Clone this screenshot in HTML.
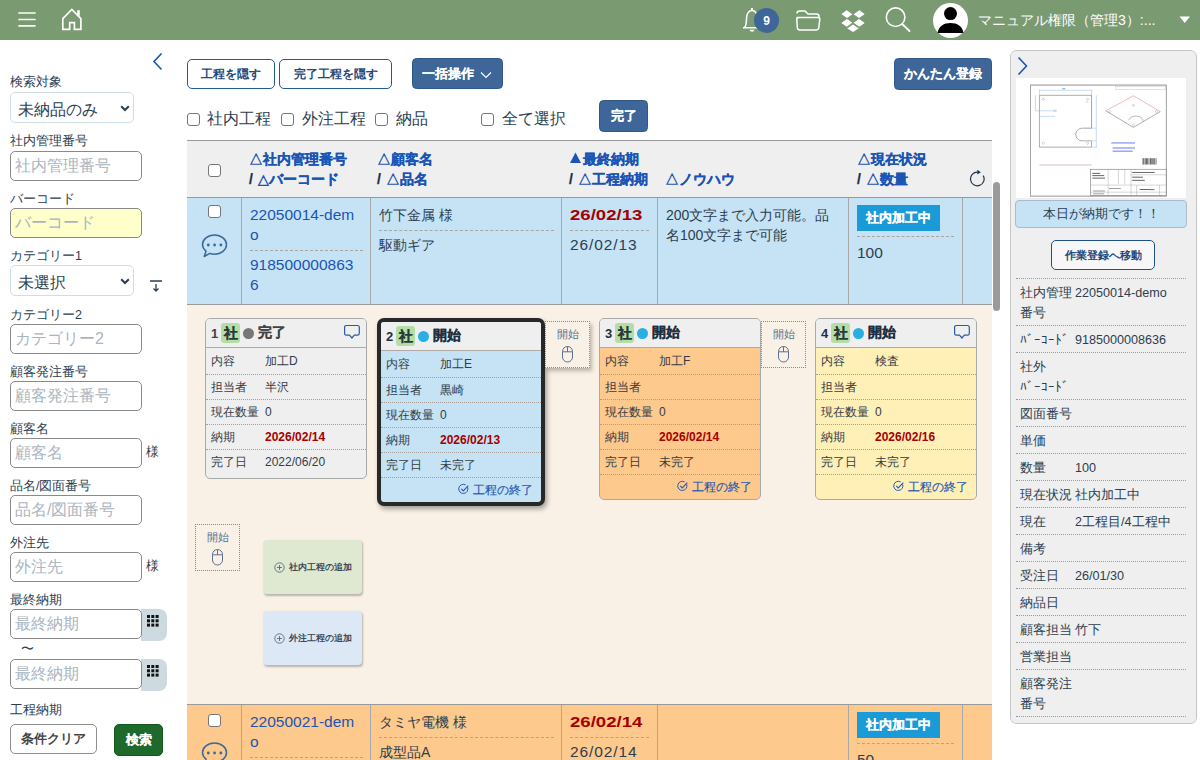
<!DOCTYPE html>
<html><head><meta charset="utf-8">
<style>
*{box-sizing:border-box;margin:0;padding:0}
html,body{width:1200px;height:760px;overflow:hidden;background:#fff;font-family:"Liberation Sans",sans-serif;color:#2c3e50}
.a{position:absolute}
#hdr{left:0;top:0;width:1200px;height:40px;background:#7a9a72}
.lbl{position:absolute;left:10px;font-size:12.5px;line-height:16px;color:#2c3e50;white-space:nowrap}
.inp{position:absolute;left:10px;width:132px;height:30px;border:1px solid #8a8a8a;border-radius:5px;background:#fff;font-size:16px;line-height:28px;padding-left:4px;color:#a9b5bf;white-space:nowrap}
.sel{position:absolute;left:10px;width:124px;height:31px;border:1px solid #cfdde8;border-radius:5px;background:#fff;font-size:16px;line-height:33px;padding-left:7px;color:#2c3e50}
.sel svg{position:absolute;right:3px;top:12px}
.sama{position:absolute;left:146px;font-size:13px;color:#2c3e50;margin-top:-0.5px}
.cal{position:absolute;left:141px;width:26px;height:32px;background:#cddadf;border-radius:0 8px 8px 0}
.btnw{position:absolute;border:1px solid #245a8e;border-radius:5px;background:#fff;color:#1f4a7c;font-weight:bold;font-size:12.3px;text-align:center;line-height:28px}
.btnb{position:absolute;border-radius:4.5px;background:#3e6699;border:1px solid #2d5888;color:#fff;font-weight:bold;font-size:12.5px;text-align:center}
.cb{position:absolute;width:13px;height:13px;border:1px solid #767676;border-radius:3px;background:#fff}
.chk{position:absolute;font-size:16px;line-height:18px;color:#2c3e50;white-space:nowrap}
.th{position:absolute;font-size:14px;font-weight:bold;color:#1a55b5;line-height:20px;white-space:nowrap}
.th i{font-style:normal;color:#1c2d3d;margin-right:1.5px}
.th u{text-decoration:none;-webkit-text-stroke:0}
.vl{position:absolute;width:1px;background:#a8a8a8}
.cell{position:absolute;font-size:14px;line-height:20px;white-space:nowrap}
.n{font-size:15.5px}
.rn{font-size:15.5px;display:inline-block;transform:scaleX(1.2);transform-origin:0 0}
.gn{font-size:15.5px;letter-spacing:0.9px}
.dash{position:absolute;height:0;border-top:1px dashed #aba59f}
.link{color:#1a55b5}
.red{color:#a50000;font-weight:bold}
.badge{position:absolute;background:#1a9ad6;color:#fff;font-weight:bold;font-size:13px;text-align:center;line-height:24px}
.card{position:absolute;border:1px solid #a9a9a9;border-radius:5px;background:#efefef;overflow:hidden}
.ch{position:absolute;left:0;top:0;right:0;height:29px;background:#efefef;border-bottom:1px solid #b0aaa5;z-index:2}
.cr{position:absolute;left:0;right:0;height:25px;border-top:1px dotted #a89f98;font-size:12px;line-height:24px;color:#333d48;white-space:nowrap}
.cr span{position:absolute;left:5px}
.cr b{position:absolute;left:59px;font-weight:normal}
.cr b.r{color:#a50000;font-weight:bold}
.num{position:absolute;font-size:13px;font-weight:bold;color:#1f3040;line-height:16px}
.sha{position:absolute;width:19px;height:20px;background:#b5dea5;border-radius:3px;font-size:14px;font-weight:bold;color:#2a3a3a;text-align:center;line-height:20px}
.dot{position:absolute;width:11px;height:11px;border-radius:50%;background:#2ab0e0}
.stt{position:absolute;font-size:13.5px;font-weight:bold;color:#1f3040;line-height:16px;white-space:nowrap}
.fin{position:absolute;font-size:12px;color:#2458b0;-webkit-text-stroke:0.15px currentColor;line-height:16px;white-space:nowrap}
.drop{position:absolute;width:45px;height:47px;border:1px dotted #8a8a8a;background:#f9f1e6;text-align:center}
.drop div{position:absolute;left:0;right:0;top:6px;font-size:10.5px;line-height:13px;color:#5a7090}
.drop svg{position:absolute;left:16px;top:24px}
.addb{position:absolute;width:99px;height:54px;border-radius:4px;box-shadow:1px 1.5px 2px rgba(0,0,0,.25);font-size:8.7px;font-weight:bold;color:#3a4a5c;line-height:54px;white-space:nowrap}
.addb svg{position:absolute;left:11px;top:22px}
.addb span{position:absolute;left:26px}
.n2{font-size:12.6px}
.pi{position:absolute;left:1016px;width:170px;border-top:1px dotted #999;font-size:12.7px;line-height:20px;color:#2c3e50}
.pi .pl{position:absolute;left:4px;width:54px}
.pi b{position:absolute;left:59px;font-weight:normal;white-space:nowrap}
.th,.badge,.stt,.sha{-webkit-text-stroke:0.25px currentColor}
.btnb{-webkit-text-stroke:0.1px currentColor}
</style></head><body>
<!-- header -->
<div id="hdr" class="a">
<svg class="a" style="left:0;top:0" width="1200" height="40">
<g stroke="#fff" stroke-width="1.7" stroke-linecap="round" fill="none">
<line x1="19" y1="13" x2="35" y2="13"/><line x1="19" y1="19.5" x2="35" y2="19.5"/><line x1="19" y1="25.8" x2="35" y2="25.8"/>
<path d="M62.8 29.4 V18.6 L71.8 9.4 L80.9 18.6 V29.4 H74.4 V22.6 H69.7 V29.4 Z" stroke-linejoin="miter" stroke-linecap="butt"/>
</g>
<rect x="77.2" y="10.2" width="2.6" height="5.5" fill="#fff"/>
<!-- bell -->
<g fill="none" stroke="#fff" stroke-width="1.5" stroke-linejoin="round">
<path d="M743 27.8 H761 M744.5 27.8 C746.5 25 746.5 22 746.5 18.5 C746.5 13.5 749 10.5 752 10.5 C755 10.5 757.5 13.5 757.5 18.5 C757.5 22 757.5 25 759.5 27.8"/>
</g>
<circle cx="752" cy="9" r="1.2" fill="#fff"/>
<path d="M749.5 29.8 A2.6 2.6 0 0 0 754.5 29.8 Z" fill="#fff"/>
<circle cx="766.5" cy="20.4" r="12.5" fill="#3e6699"/>
<text x="766.5" y="24.6" text-anchor="middle" font-family="Liberation Sans" font-weight="bold" font-size="12" fill="#fff">9</text>
<!-- folder -->
<path d="M797 13.5 Q797 11 799.5 11 H805 L808 14 H816.5 Q819 14 819 16.5 V17.5" fill="none" stroke="#fff" stroke-width="1.5" stroke-linejoin="round"/>
<path d="M797 17.5 H818 Q820 17.5 819.8 19.5 L818.8 27.5 Q818.5 30 816 30 H800 Q797.5 30 797.3 27.5 L796.8 19.5 Q796.8 17.5 799 17.5 Z" fill="none" stroke="#fff" stroke-width="1.5" stroke-linejoin="round"/>

<!-- dropbox -->
<g fill="#fff">
<path d="M847 10 L853 14.3 L847 18.5 L841 14.3 Z"/>
<path d="M859 10 L865 14.3 L859 18.5 L853 14.3 Z"/>
<path d="M847 18.5 L853 22.7 L847 27 L841 22.7 Z"/>
<path d="M859 18.5 L865 22.7 L859 27 L853 22.7 Z"/>
<path d="M853 24 L859 28.2 L853 32 L847 28.2 Z"/>
</g>
<path d="M847 10 L853 14.3 L859 10 M841 14.3 L847 18.5 L853 14.3 L859 18.5 L865 14.3 M841 22.7 L847 18.5 L853 22.7 L859 18.5 L865 22.7 M847 27 L853 22.7 L859 27 M847 28.2 L853 24 L859 28.2" fill="none" stroke="#7a9a72" stroke-width="0.9"/>
<!-- search -->
<circle cx="895.6" cy="17.2" r="9.3" fill="none" stroke="#fff" stroke-width="1.6"/>
<line x1="902.2" y1="24" x2="909.5" y2="31" stroke="#fff" stroke-width="1.9" stroke-linecap="round"/>
<!-- avatar -->
<circle cx="950.5" cy="20.5" r="17.5" fill="#fff"/>
<circle cx="950.5" cy="13.6" r="6.5" fill="#000"/>
<path d="M937.6 33 C938.5 26 944 23 950.5 23 C957 23 962.5 26 963.4 33 Z" fill="#000"/>
<path d="M1179.5 16.5 H1190 L1184.75 23 Z" fill="#fff"/>
</svg>
<div class="a" style="left:978px;top:11.5px;font-size:14.1px;line-height:17px;color:#fff;white-space:nowrap">マニュアル権限（管理3）:...</div>
</div>
<!-- sidebar -->
<svg class="a" style="left:150px;top:50px" width="16" height="22"><path d="M11.5 3.5 L4 11.5 L11.5 19.5" fill="none" stroke="#1a55b5" stroke-width="1.6"/></svg>
<div class="lbl" style="top:74px">検索対象</div>
<div class="sel" style="top:92px">未納品のみ<svg width="10" height="7"><path d="M1.2 1.2 L5 5 L8.8 1.2" fill="none" stroke="#2c3e50" stroke-width="2"/></svg></div>
<div class="lbl" style="top:133px">社内管理番号</div>
<div class="inp" style="top:151px">社内管理番号</div>
<div class="lbl" style="top:191px">バーコード</div>
<div class="inp" style="top:208px;background:#ffffcc">バーコード</div>
<div class="lbl" style="top:248px">カテゴリー1</div>
<div class="sel" style="top:265px">未選択<svg width="10" height="7"><path d="M1.2 1.2 L5 5 L8.8 1.2" fill="none" stroke="#2c3e50" stroke-width="2"/></svg></div>
<svg class="a" style="left:149px;top:279px" width="14" height="14"><path d="M1 2 H13 M7 5 V12 M4.5 9.5 L7 12 L9.5 9.5" fill="none" stroke="#2c3e50" stroke-width="1.3"/></svg>
<div class="lbl" style="top:307px">カテゴリー2</div>
<div class="inp" style="top:324px">カテゴリー2</div>
<div class="lbl" style="top:364px">顧客発注番号</div>
<div class="inp" style="top:381px">顧客発注番号</div>
<div class="lbl" style="top:421px">顧客名</div>
<div class="inp" style="top:438px">顧客名</div>
<div class="sama" style="top:443px">様</div>
<div class="lbl" style="top:478px">品名/図面番号</div>
<div class="inp" style="top:495px">品名/図面番号</div>
<div class="lbl" style="top:535px">外注先</div>
<div class="inp" style="top:552px">外注先</div>
<div class="sama" style="top:557px">様</div>
<div class="lbl" style="top:592px">最終納期</div>
<div class="cal" style="top:609px"><svg class="a" style="left:6px;top:6px" width="12" height="12"><g fill="#111"><rect x="0" y="0" width="3" height="3"/><rect x="4.3" y="0" width="3" height="3"/><rect x="8.6" y="0" width="3" height="3"/><rect x="0" y="4.3" width="3" height="3"/><rect x="4.3" y="4.3" width="3" height="3"/><rect x="8.6" y="4.3" width="3" height="3"/><rect x="0" y="8.6" width="3" height="3"/><rect x="4.3" y="8.6" width="3" height="3"/><rect x="8.6" y="8.6" width="3" height="3"/></g></svg></div>
<div class="inp" style="top:609px">最終納期</div>
<div class="a" style="left:21px;top:640px;font-size:13px;color:#2c3e50">〜</div>
<div class="cal" style="top:659px"><svg class="a" style="left:6px;top:6px" width="12" height="12"><g fill="#111"><rect x="0" y="0" width="3" height="3"/><rect x="4.3" y="0" width="3" height="3"/><rect x="8.6" y="0" width="3" height="3"/><rect x="0" y="4.3" width="3" height="3"/><rect x="4.3" y="4.3" width="3" height="3"/><rect x="8.6" y="4.3" width="3" height="3"/><rect x="0" y="8.6" width="3" height="3"/><rect x="4.3" y="8.6" width="3" height="3"/><rect x="8.6" y="8.6" width="3" height="3"/></g></svg></div>
<div class="inp" style="top:659px">最終納期</div>
<div class="lbl" style="top:702px">工程納期</div>
<div class="a" style="left:10px;top:724px;width:87px;height:30px;border:1px solid #8e8e8e;border-radius:5px;background:#fff;color:#444;font-weight:bold;font-size:12.5px;line-height:28px;text-align:center">条件クリア</div>
<div class="a" style="left:114px;top:724px;width:49px;height:32px;border-radius:5px;background:#1e6a2c;border:1px solid #12591e;color:#fff;font-weight:bold;font-size:12.5px;line-height:30px;text-align:center;-webkit-text-stroke:0.2px #fff">検索</div>
<!-- main top -->
<div class="btnw" style="left:187px;top:59px;width:88px;height:30px">工程を隠す</div>
<div class="btnw" style="left:279px;top:59px;width:113px;height:30px">完了工程を隠す</div>
<div class="btnb" style="left:412px;top:58px;width:91px;height:31px;line-height:31px;padding-right:19px">一括操作<svg class="a" style="left:67px;top:12px" width="12" height="8"><path d="M1 1.5 L6 6.5 L11 1.5" fill="none" stroke="#fff" stroke-width="1.1"/></svg></div>
<div class="btnb" style="left:894px;top:58px;width:98px;height:32px;line-height:31px">かんたん登録</div>
<div class="cb" style="left:187px;top:113px"></div><div class="chk" style="left:207px;top:110px">社内工程</div>
<div class="cb" style="left:281px;top:113px"></div><div class="chk" style="left:302px;top:110px">外注工程</div>
<div class="cb" style="left:375px;top:113px"></div><div class="chk" style="left:396px;top:110px">納品</div>
<div class="cb" style="left:481px;top:113px"></div><div class="chk" style="left:502px;top:110px">全て選択</div>
<div class="btnb" style="left:599px;top:100px;width:49px;height:32px;line-height:31.5px">完了</div>
<!-- rows -->
<div class="a" style="left:187px;top:198px;width:805px;height:106px;background:#c6e3f5"></div>
<div class="vl" style="left:241px;top:198px;height:106px"></div>
<div class="vl" style="left:370px;top:198px;height:106px"></div>
<div class="vl" style="left:561px;top:198px;height:106px"></div>
<div class="vl" style="left:657px;top:198px;height:106px"></div>
<div class="vl" style="left:848px;top:198px;height:106px"></div>
<div class="vl" style="left:962px;top:198px;height:106px"></div>
<div class="cb" style="left:208px;top:205px"></div>
<div class="a" style="left:200.5px;top:233px"><svg width="28" height="26"><path d="M13.5 2 C20.2 2 25.5 6.3 25.5 11.6 C25.5 16.9 20.2 21.2 13.5 21.2 C11.8 21.2 10.2 20.9 8.8 20.4 L3.2 23.5 L5 18.2 C2.9 16.5 1.5 14.2 1.5 11.6 C1.5 6.3 6.8 2 13.5 2 Z" fill="none" stroke="#3a6a9a" stroke-width="1.5" stroke-linejoin="round"/><circle cx="7.3" cy="12" r="1.4" fill="#3a6a9a"/><circle cx="13.6" cy="12" r="1.4" fill="#3a6a9a"/><circle cx="19.9" cy="12" r="1.4" fill="#3a6a9a"/></svg></div>
<div class="cell link" style="left:250px;top:205px"><span class="n">22050014-dem<br>o</span></div>
<div class="dash" style="left:250px;top:250px;width:113px"></div>
<div class="cell link" style="left:250px;top:255px"><span class="n">918500000863<br>6</span></div>
<div class="cell" style="left:379px;top:205px">竹下金属 様</div>
<div class="dash" style="left:379px;top:230px;width:175px"></div>
<div class="cell" style="left:379px;top:235px">駆動ギア</div>
<div class="cell red" style="left:570px;top:205px"><span class="rn">26/02/13</span></div>
<div class="dash" style="left:570px;top:230px;width:79px"></div>
<div class="cell" style="left:570px;top:235px"><span class="gn">26/02/13</span></div>
<div class="cell" style="left:666px;top:205px">200文字まで入力可能。品<br>名100文字まで可能</div>
<div class="badge" style="left:857px;top:205px;width:83px;height:26px;line-height:26px">社内加工中</div>
<div class="dash" style="left:857px;top:236px;width:97px"></div>
<div class="cell" style="left:857px;top:243px"><span class="n">100</span></div>
<div class="a" style="left:187px;top:304px;width:805px;height:1px;background:#9a9a9a"></div>
<div class="a" style="left:187px;top:704px;width:805px;height:1px;background:#9a9a9a"></div>
<div class="a" style="left:187px;top:705px;width:805px;height:55px;background:#fec98c"></div>
<div class="vl" style="left:241px;top:705px;height:55px"></div>
<div class="vl" style="left:370px;top:705px;height:55px"></div>
<div class="vl" style="left:561px;top:705px;height:55px"></div>
<div class="vl" style="left:657px;top:705px;height:55px"></div>
<div class="vl" style="left:848px;top:705px;height:55px"></div>
<div class="vl" style="left:962px;top:705px;height:55px"></div>
<div class="cb" style="left:208px;top:714px"></div>
<div class="a" style="left:200.5px;top:741px"><svg width="28" height="26"><path d="M13.5 2 C20.2 2 25.5 6.3 25.5 11.6 C25.5 16.9 20.2 21.2 13.5 21.2 C11.8 21.2 10.2 20.9 8.8 20.4 L3.2 23.5 L5 18.2 C2.9 16.5 1.5 14.2 1.5 11.6 C1.5 6.3 6.8 2 13.5 2 Z" fill="none" stroke="#3a6a9a" stroke-width="1.5" stroke-linejoin="round"/><circle cx="7.3" cy="12" r="1.4" fill="#3a6a9a"/><circle cx="13.6" cy="12" r="1.4" fill="#3a6a9a"/><circle cx="19.9" cy="12" r="1.4" fill="#3a6a9a"/></svg></div>
<div class="cell link" style="left:250px;top:712px"><span class="n">22050021-dem<br>o</span></div>
<div class="dash" style="left:250px;top:757px;width:113px"></div>
<div class="cell" style="left:379px;top:712px">タミヤ電機 様</div>
<div class="dash" style="left:379px;top:737px;width:175px"></div>
<div class="cell" style="left:379px;top:742px">成型品A</div>
<div class="cell red" style="left:570px;top:712px"><span class="rn">26/02/14</span></div>
<div class="dash" style="left:570px;top:737px;width:79px"></div>
<div class="cell" style="left:570px;top:742px"><span class="gn">26/02/14</span></div>
<div class="badge" style="left:857px;top:712px;width:83px;height:26px;line-height:26px">社内加工中</div>
<div class="dash" style="left:857px;top:743px;width:97px"></div>
<div class="cell" style="left:857px;top:750px"><span class="n">50</span></div>
<!-- table header -->
<div class="a" style="left:187px;top:140px;width:805px;height:58px;background:#efefef;border-top:1px solid #9a9a9a;border-bottom:1px solid #9a9a9a"></div>
<div class="cb" style="left:208px;top:164px"></div>
<div class="th" style="left:249px;top:149px"><u>△</u>社内管理番号<br><i>/ </i><u>△</u>バーコード</div>
<div class="th" style="left:377px;top:149px"><u>△</u>顧客名<br><i>/ </i><u>△</u>品名</div>
<div class="th" style="left:569px;top:149px"><span style="display:inline-block;width:14px;height:14px;position:relative;vertical-align:-1px"><svg style="position:absolute;left:1px;top:0.5px" width="12" height="12"><path d="M5.5 0.5 L11 11 H0 Z" fill="#1a55b5"/></svg></span>最終納期<br><i>/ </i><u>△</u>工程納期</div>
<div class="th" style="left:665px;top:169px"><u>△</u>ノウハウ</div>
<div class="th" style="left:857px;top:149px"><u>△</u>現在状況<br><i>/ </i><u>△</u>数量</div>
<svg class="a" style="left:968px;top:169px" width="18" height="18"><path d="M15.2 6.6 A6.8 6.8 0 1 1 9.6 3.2" fill="none" stroke="#1f3348" stroke-width="1.2"/><path d="M9.3 0.8 L12.8 3.2 L9.3 5.6 Z" fill="#1f3348"/></svg>
<div class="a" style="left:187px;top:305px;width:805px;height:399px;background:#f9f1e6"></div>
<div class="card" style="left:205px;top:318px;width:162px;height:161px;background:#efefef">
<div class="ch"><div class="num" style="left:5px;top:7px;color:#444">1</div><div class="sha" style="left:15px;top:4px">社</div><div class="dot" style="left:37px;top:9px;background:#777"></div><div class="stt" style="left:52px;top:6px;color:#444">完了</div><div class="a" style="right:5px;top:5px"><svg width="18" height="16"><path d="M3.5 1.5 H14.5 Q16.3 1.5 16.3 3.5 V9.3 Q16.3 11.2 14.5 11.2 H11.3 L8.9 14 L6.5 11.2 H3.5 Q1.6 11.2 1.6 9.3 V3.5 Q1.6 1.5 3.5 1.5 Z" fill="none" stroke="#2a5c9a" stroke-width="1.2" stroke-linejoin="round"/></svg></div></div>
<div class="cr" style="top:30px;border-top:0;line-height:25px"><span>内容</span><b>加工D</b></div>
<div class="cr" style="top:55px"><span>担当者</span><b>半沢</b></div>
<div class="cr" style="top:80px"><span>現在数量</span><b>0</b></div>
<div class="cr" style="top:105px"><span>納期</span><b class="r">2026/02/14</b></div>
<div class="cr" style="top:130px"><span>完了日</span><b>2022/06/20</b></div>
</div>
<div class="card" style="left:377px;top:318px;width:168px;height:188px;border:4px solid #282828;border-radius:7px;background:#c5e3f5;box-shadow:2px 3px 5px rgba(0,0,0,.35)">
<div class="ch"><div class="num" style="left:5px;top:7px">2</div><div class="sha" style="left:15px;top:4px">社</div><div class="dot" style="left:37px;top:9px;background:#2ab0e0"></div><div class="stt" style="left:52px;top:6px">開始</div></div>
<div class="cr" style="top:30px;border-top:0;line-height:25px"><span>内容</span><b>加工E</b></div>
<div class="cr" style="top:55px"><span>担当者</span><b>黒崎</b></div>
<div class="cr" style="top:80px"><span>現在数量</span><b>0</b></div>
<div class="cr" style="top:105px"><span>納期</span><b class="r">2026/02/13</b></div>
<div class="cr" style="top:130px"><span>完了日</span><b>未完了</b></div>
<div class="cr" style="top:155px;height:26px"><div class="fin" style="right:8px;top:3.5px"><svg class="a" style="left:-15px;top:1.5px" width="12" height="12"><path d="M9.6 4.2 A4.6 4.6 0 1 1 7.6 1.9" fill="none" stroke="#2a5cb0" stroke-width="1"/><path d="M3.2 5.8 L5.3 7.9 L10.3 2.6" fill="none" stroke="#2a5cb0" stroke-width="1.1"/></svg>工程の終了</div></div>
</div>
<div class="drop" style="left:545px;top:321px;box-shadow:2px 3px 4px rgba(0,0,0,.25)"><div>開始</div><svg width="12" height="17"><rect x="0.5" y="0.5" width="10" height="15.5" rx="5" fill="none" stroke="#5a7090" stroke-width="1"/><path d="M5.5 0.5 V5.8 M0.5 5.8 H10.5" stroke="#5a7090" stroke-width="1"/></svg></div>
<div class="card" style="left:599px;top:318px;width:162px;height:182px;background:#fec98c">
<div class="ch"><div class="num" style="left:5px;top:7px">3</div><div class="sha" style="left:15px;top:4px">社</div><div class="dot" style="left:37px;top:9px;background:#2ab0e0"></div><div class="stt" style="left:52px;top:6px">開始</div></div>
<div class="cr" style="top:30px;border-top:0;line-height:25px"><span>内容</span><b>加工F</b></div>
<div class="cr" style="top:55px"><span>担当者</span><b></b></div>
<div class="cr" style="top:80px"><span>現在数量</span><b>0</b></div>
<div class="cr" style="top:105px"><span>納期</span><b class="r">2026/02/14</b></div>
<div class="cr" style="top:130px"><span>完了日</span><b>未完了</b></div>
<div class="cr" style="top:155px;height:26px"><div class="fin" style="right:8px;top:3.5px"><svg class="a" style="left:-15px;top:1.5px" width="12" height="12"><path d="M9.6 4.2 A4.6 4.6 0 1 1 7.6 1.9" fill="none" stroke="#2a5cb0" stroke-width="1"/><path d="M3.2 5.8 L5.3 7.9 L10.3 2.6" fill="none" stroke="#2a5cb0" stroke-width="1.1"/></svg>工程の終了</div></div>
</div>
<div class="drop" style="left:761px;top:321px"><div>開始</div><svg width="12" height="17"><rect x="0.5" y="0.5" width="10" height="15.5" rx="5" fill="none" stroke="#5a7090" stroke-width="1"/><path d="M5.5 0.5 V5.8 M0.5 5.8 H10.5" stroke="#5a7090" stroke-width="1"/></svg></div>
<div class="card" style="left:815px;top:318px;width:162px;height:182px;background:#fff0b8">
<div class="ch"><div class="num" style="left:5px;top:7px">4</div><div class="sha" style="left:15px;top:4px">社</div><div class="dot" style="left:37px;top:9px;background:#2ab0e0"></div><div class="stt" style="left:52px;top:6px">開始</div><div class="a" style="right:5px;top:5px"><svg width="18" height="16"><path d="M3.5 1.5 H14.5 Q16.3 1.5 16.3 3.5 V9.3 Q16.3 11.2 14.5 11.2 H11.3 L8.9 14 L6.5 11.2 H3.5 Q1.6 11.2 1.6 9.3 V3.5 Q1.6 1.5 3.5 1.5 Z" fill="none" stroke="#2a5c9a" stroke-width="1.2" stroke-linejoin="round"/></svg></div></div>
<div class="cr" style="top:30px;border-top:0;line-height:25px"><span>内容</span><b>検査</b></div>
<div class="cr" style="top:55px"><span>担当者</span><b></b></div>
<div class="cr" style="top:80px"><span>現在数量</span><b>0</b></div>
<div class="cr" style="top:105px"><span>納期</span><b class="r">2026/02/16</b></div>
<div class="cr" style="top:130px"><span>完了日</span><b>未完了</b></div>
<div class="cr" style="top:155px;height:26px"><div class="fin" style="right:8px;top:3.5px"><svg class="a" style="left:-15px;top:1.5px" width="12" height="12"><path d="M9.6 4.2 A4.6 4.6 0 1 1 7.6 1.9" fill="none" stroke="#2a5cb0" stroke-width="1"/><path d="M3.2 5.8 L5.3 7.9 L10.3 2.6" fill="none" stroke="#2a5cb0" stroke-width="1.1"/></svg>工程の終了</div></div>
</div>
<div class="drop" style="left:195px;top:524px"><div>開始</div><svg width="12" height="17"><rect x="0.5" y="0.5" width="10" height="15.5" rx="5" fill="none" stroke="#5a7090" stroke-width="1"/><path d="M5.5 0.5 V5.8 M0.5 5.8 H10.5" stroke="#5a7090" stroke-width="1"/></svg></div>
<div class="addb" style="left:263px;top:540px;background:#dfe8d0"><svg width="11" height="11"><circle cx="5.5" cy="5.5" r="4.7" fill="none" stroke="#5a6a7a" stroke-width="0.9"/><path d="M5.5 3 V8 M3 5.5 H8" stroke="#5a6a7a" stroke-width="0.9"/></svg><span>社内工程の追加</span></div>
<div class="addb" style="left:263px;top:611px;background:#dde8f6"><svg width="11" height="11"><circle cx="5.5" cy="5.5" r="4.7" fill="none" stroke="#5a6a7a" stroke-width="0.9"/><path d="M5.5 3 V8 M3 5.5 H8" stroke="#5a6a7a" stroke-width="0.9"/></svg><span>外注工程の追加</span></div>
<div class="a" style="left:993px;top:182px;width:7px;height:129px;background:#9b9b9b;border-radius:4px"></div>
<!-- right panel -->
<div class="a" style="left:1010px;top:50px;width:187px;height:674px;overflow:hidden;border-radius:6px">
<div style="position:absolute;left:-1010px;top:-50px;width:1200px;height:760px">
<div class="a" style="left:1010px;top:50px;width:187px;height:674px;background:#efefef;border:1px solid #c6c6c6;border-radius:6px"></div>
<svg class="a" style="left:1014px;top:54px" width="18" height="24"><path d="M4.5 3.5 L12.5 12 L4.5 20.5" fill="none" stroke="#1a55b5" stroke-width="1.6"/></svg>
<svg class="a" style="left:1016px;top:78px;background:#fff" width="170" height="120"><rect x="14.42" y="7.06" width="135.86" height="111.06" fill="#fff" stroke="#8a8a8a" stroke-width="0.8"/><path d="M23.43 17.32 H75.56 V50.18 H66.08 A6.3 6.3 0 0 0 66.08 62.82 H75.56 V69.14 H23.43 Z" fill="none" stroke="#777" stroke-width="0.6"/><line x1="75.56" y1="17.32" x2="75.56" y2="50.18" stroke="#d88" stroke-width="0.6"/><line x1="23.43" y1="12.27" x2="75.56" y2="12.27" stroke="#8ab8e8" stroke-width="0.5"/><line x1="23.43" y1="11.48" x2="23.43" y2="17.32" stroke="#8ab8e8" stroke-width="0.5"/><line x1="75.56" y1="11.48" x2="75.56" y2="17.32" stroke="#8ab8e8" stroke-width="0.5"/><line x1="19.48" y1="17.32" x2="19.48" y2="32.81" stroke="#8ab8e8" stroke-width="0.5"/><line x1="19.48" y1="32.81" x2="39.23" y2="32.81" stroke="#8ab8e8" stroke-width="0.5"/><line x1="23.43" y1="38.33" x2="39.23" y2="38.33" stroke="#8ab8e8" stroke-width="0.5"/><line x1="80.3" y1="17.32" x2="80.3" y2="69.93" stroke="#8ab8e8" stroke-width="0.5"/><line x1="69.24" y1="50.18" x2="80.3" y2="50.18" stroke="#8ab8e8" stroke-width="0.5"/><line x1="76.35" y1="62.82" x2="80.3" y2="62.82" stroke="#8ab8e8" stroke-width="0.5"/><line x1="76.35" y1="69.14" x2="80.3" y2="69.14" stroke="#8ab8e8" stroke-width="0.5"/><line x1="69.24" y1="24.12" x2="72.4" y2="24.12" stroke="#8ab8e8" stroke-width="0.5"/><rect x="46.33" y="9.9" width="3" height="1.5" fill="#8ab8e8"/><path d="M89.78 32.81 L117.42 17.8 L144.28 33.6" fill="none" stroke="#d89090" stroke-width="0.6"/><path d="M144.28 33.6 L117.42 49.39 L89.78 32.81" fill="none" stroke="#777" stroke-width="0.6"/><path d="M112.69 42.28 A6 4 0 0 1 126.9 43.39" fill="none" stroke="#888" stroke-width="0.6"/><rect x="95.31" y="64.39" width="23.7" height="1.1" fill="#7a88f0"/><rect x="96.57" y="69.45" width="22.43" height="1.1" fill="#7a88f0"/><rect x="96.57" y="72.61" width="20.06" height="1.1" fill="#7a88f0"/><line x1="23.43" y1="86.99" x2="75.56" y2="86.99" stroke="#c9b0b0" stroke-width="0.8"/><rect x="126.59" y="80.2" width="1.0" height="6.32" fill="#444"/><rect x="127.79" y="80.2" width="0.6" height="6.32" fill="#444"/><rect x="128.99" y="80.2" width="0.6" height="6.32" fill="#444"/><rect x="130.19" y="80.2" width="1.0" height="6.32" fill="#444"/><rect x="131.39" y="80.2" width="0.6" height="6.32" fill="#444"/><rect x="132.59" y="80.2" width="0.6" height="6.32" fill="#444"/><rect x="133.79" y="80.2" width="1.0" height="6.32" fill="#444"/><rect x="134.99" y="80.2" width="0.6" height="6.32" fill="#444"/><rect x="136.19" y="80.2" width="0.6" height="6.32" fill="#444"/><rect x="137.39" y="80.2" width="1.0" height="6.32" fill="#444"/><rect x="138.59" y="80.2" width="0.6" height="6.32" fill="#444"/><rect x="139.79" y="80.2" width="0.6" height="6.32" fill="#444"/><rect x="74.45" y="91.26" width="75.83" height="26.38" fill="none" stroke="#777" stroke-width="0.6"/><line x1="74.45" y1="107.06" x2="150.28" y2="107.06" stroke="#999" stroke-width="0.4"/><line x1="115.06" y1="91.26" x2="115.06" y2="117.64" stroke="#999" stroke-width="0.4"/><line x1="92.15" y1="91.26" x2="92.15" y2="117.64" stroke="#999" stroke-width="0.4"/><line x1="115.06" y1="96.79" x2="150.28" y2="96.79" stroke="#999" stroke-width="0.4"/><line x1="115.06" y1="114.16" x2="150.28" y2="114.16" stroke="#999" stroke-width="0.4"/><line x1="74.45" y1="114.16" x2="115.06" y2="114.16" stroke="#999" stroke-width="0.4"/><line x1="102.42" y1="91.26" x2="102.42" y2="106.27" stroke="#999" stroke-width="0.4"/><line x1="108.74" y1="91.26" x2="108.74" y2="106.27" stroke="#999" stroke-width="0.4"/><line x1="143.49" y1="107.06" x2="143.49" y2="117.64" stroke="#999" stroke-width="0.4"/><line x1="120.58" y1="107.06" x2="120.58" y2="117.64" stroke="#999" stroke-width="0.4"/><rect x="116.16" y="93.94" width="22.59" height="1" fill="#666"/><rect x="116.16" y="98.68" width="10.74" height="1" fill="#666"/><rect x="116.16" y="101.84" width="12.64" height="1" fill="#666"/><rect x="76.35" y="94.89" width="7.9" height="1" fill="#666"/><rect x="76.35" y="97.1" width="11.85" height="1" fill="#666"/><rect x="76.35" y="99.63" width="12.64" height="1" fill="#666"/><rect x="123.74" y="111.0" width="14.22" height="1" fill="#666"/><rect x="99.26" y="8.32" width="50.55" height="3.16" fill="none" stroke="#bbb" stroke-width="0.4"/><path d="M27.38 19.97 l1.3 1.3 l-1.3 1.3 l-1.3 -1.3 Z" fill="none" stroke="#888" stroke-width="0.4"/><path d="M71.61 19.97 l1.3 1.3 l-1.3 1.3 l-1.3 -1.3 Z" fill="none" stroke="#888" stroke-width="0.4"/><path d="M27.38 63.89 l1.3 1.3 l-1.3 1.3 l-1.3 -1.3 Z" fill="none" stroke="#888" stroke-width="0.4"/><path d="M71.61 63.89 l1.3 1.3 l-1.3 1.3 l-1.3 -1.3 Z" fill="none" stroke="#888" stroke-width="0.4"/><path d="M39.23 31.51 l1.3 1.3 l-1.3 1.3 l-1.3 -1.3 Z" fill="none" stroke="#888" stroke-width="0.4"/><path d="M117.42 25.98 l1.3 1.3 l-1.3 1.3 l-1.3 -1.3 Z" fill="none" stroke="#888" stroke-width="0.4"/><path d="M93.73 32.3 l1.3 1.3 l-1.3 1.3 l-1.3 -1.3 Z" fill="none" stroke="#888" stroke-width="0.4"/><path d="M140.33 32.3 l1.3 1.3 l-1.3 1.3 l-1.3 -1.3 Z" fill="none" stroke="#888" stroke-width="0.4"/><path d="M117.42 45.72 l1.3 1.3 l-1.3 1.3 l-1.3 -1.3 Z" fill="none" stroke="#888" stroke-width="0.4"/><rect x="77.14" y="112.58" width="11.85" height="0.8" fill="#888"/><rect x="77.14" y="115.43" width="11.06" height="0.8" fill="#888"/><rect x="92.94" y="110.21" width="11.85" height="0.8" fill="#888"/><rect x="133.22" y="111.32" width="5.53" height="0.8" fill="#888"/><rect x="14.42" y="7.06" width="135.86" height="111.06" fill="none" stroke="#aaa" stroke-width="0.4"/></svg>
<div class="a" style="left:1015px;top:200px;width:172px;height:28px;background:#c5e3f5;border:1px solid #a9bccb;border-radius:4px;font-size:13px;line-height:26px;text-align:center;color:#2c3e50">本日が納期です！！</div>
<div class="btnw" style="left:1051px;top:240px;width:104px;height:30px;background:#f7f7f7;border-color:#1d4f8a;font-size:11.3px">作業登録へ移動</div>
<div class="pi" style="top:278px;height:47px"><span class="pl" style="top:4px">社内管理<br>番号</span><b style="top:4px"><span class="n2">22050014-demo</span></b></div>
<div class="pi" style="top:325px;height:27px"><span class="pl" style="top:4px">ﾊﾞｰｺｰﾄﾞ</span><b style="top:4px"><span class="n2">9185000008636</span></b></div>
<div class="pi" style="top:352px;height:47px"><span class="pl" style="top:4px">社外<br>ﾊﾞｰｺｰﾄﾞ</span><b style="top:4px"></b></div>
<div class="pi" style="top:399px;height:27px"><span class="pl" style="top:4px">図面番号</span><b style="top:4px"></b></div>
<div class="pi" style="top:426px;height:27px"><span class="pl" style="top:4px">単価</span><b style="top:4px"></b></div>
<div class="pi" style="top:453px;height:27px"><span class="pl" style="top:4px">数量</span><b style="top:4px"><span class="n2">100</span></b></div>
<div class="pi" style="top:480px;height:27px"><span class="pl" style="top:4px">現在状況</span><b style="top:4px">社内加工中</b></div>
<div class="pi" style="top:507px;height:27px"><span class="pl" style="top:4px">現在</span><b style="top:4px"><span class="n2">2</span>工程目<span class="n2">/4</span>工程中</b></div>
<div class="pi" style="top:534px;height:27px"><span class="pl" style="top:4px">備考</span><b style="top:4px"></b></div>
<div class="pi" style="top:561px;height:27px"><span class="pl" style="top:4px">受注日</span><b style="top:4px"><span class="n2">26/01/30</span></b></div>
<div class="pi" style="top:588px;height:27px"><span class="pl" style="top:4px">納品日</span><b style="top:4px"></b></div>
<div class="pi" style="top:615px;height:27px"><span class="pl" style="top:4px">顧客担当</span><b style="top:4px">竹下</b></div>
<div class="pi" style="top:642px;height:27px"><span class="pl" style="top:4px">営業担当</span><b style="top:4px"></b></div>
<div class="pi" style="top:669px;height:47px"><span class="pl" style="top:4px">顧客発注<br>番号</span><b style="top:4px"></b></div>
<div class="pi" style="top:716px;height:27px"><span class="pl" style="top:4px">社内備考</span><b style="top:4px"></b></div>
</div></div>
</body></html>
